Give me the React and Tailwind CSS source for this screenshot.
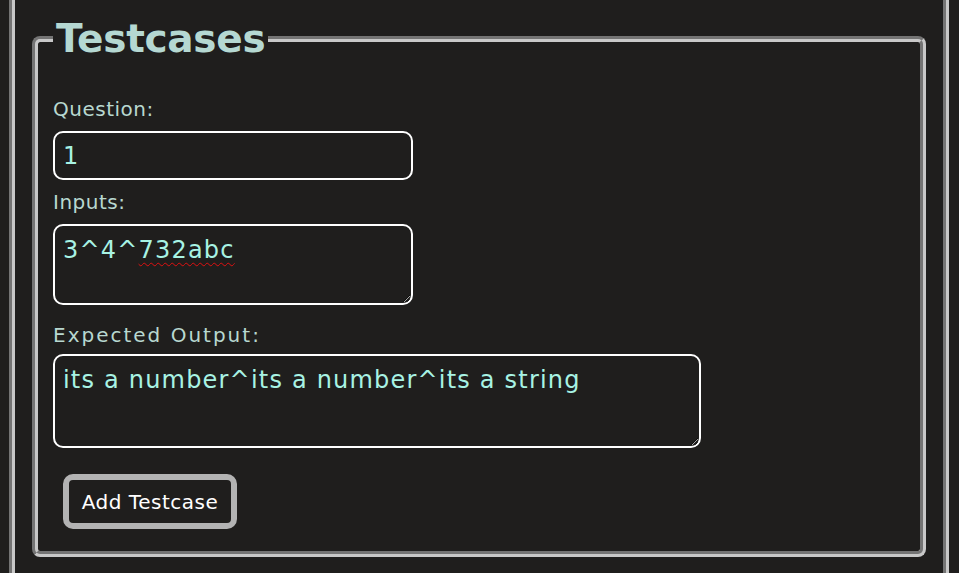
import React, { useState } from 'react';

const App = () => {
  const [question, setQuestion] = useState('1');
  const [inputs, setInputs] = useState('3^4^732abc');
  const [expected, setExpected] = useState('its a number^its a number^its a string');

  const campo =
    "block bg-transparent border-2 border-white rounded-[10px] pl-[8px] pr-[8px] text-[24px] tracking-[1.2px] text-[#a8f3e4] outline-none font-['DejaVu_Sans',sans-serif]";
  const rotulo = "block text-[20px] leading-[24px] text-[#b8d8d0]";

  return (
    <div className="h-[573px] overflow-hidden bg-[#1f1e1d] pl-[9px] pr-[10px] font-['DejaVu_Sans',sans-serif]">
      <div className="h-full border-x-[6px] border-y-0 [border-style:groove] border-[#c8c8c8] px-[17px] pt-[19px]">
        {/* Bloco de cadastro de testcases */}
        <fieldset className="border-[6px] [border-style:groove] border-[#c8c8c8] rounded-[8px] pl-[15px] pr-[15px] pt-[38px] pb-[22px]">
          <legend className="px-[3px] text-[39px] leading-[40px] font-bold tracking-[-0.3px] text-[#b5d8d2]">
            Testcases
          </legend>

          <label className={`${rotulo} tracking-[0.5px]`}>Question:</label>
          <input
            className={`${campo} mt-[10px] w-[360px] h-[49px]`}
            value={question}
            onChange={(e) => setQuestion(e.target.value)}
          />

          <label className={`${rotulo} tracking-[0.5px] mt-[10px]`}>Inputs:</label>
          <div className="relative mt-[10px] w-[360px]">
            <textarea
              spellCheck={false}
              className={`${campo} w-[360px] h-[81px] pt-[10px] leading-[28px]`}
              value={inputs}
              onChange={(e) => setInputs(e.target.value)}
            />
            {/* marca de correção ortográfica sobre o texto */}
            <div className="pointer-events-none absolute left-[10px] top-[12px] text-[24px] leading-[28px] tracking-[1.2px] text-transparent whitespace-pre">
              3^4^<span className="underline decoration-wavy decoration-[#e01010] decoration-1 underline-offset-[4px]">732abc</span>
            </div>
          </div>

          <label className={`${rotulo} tracking-[2px] mt-[18px]`}>Expected Output:</label>
          <textarea
            spellCheck={false}
            className={`${campo} mt-[7px] w-[648px] h-[94px] pt-[10px] leading-[28px]`}
            value={expected}
            onChange={(e) => setExpected(e.target.value)}
          />

          <button className="block mt-[26px] ml-[10px] w-[174px] h-[55px] border-[6px] border-[#b3b3b3] rounded-[10px] bg-[#1f1e1d] text-white text-[20px] tracking-[0.5px]">
            Add Testcase
          </button>
        </fieldset>
      </div>
    </div>
  );
};

export default App;
